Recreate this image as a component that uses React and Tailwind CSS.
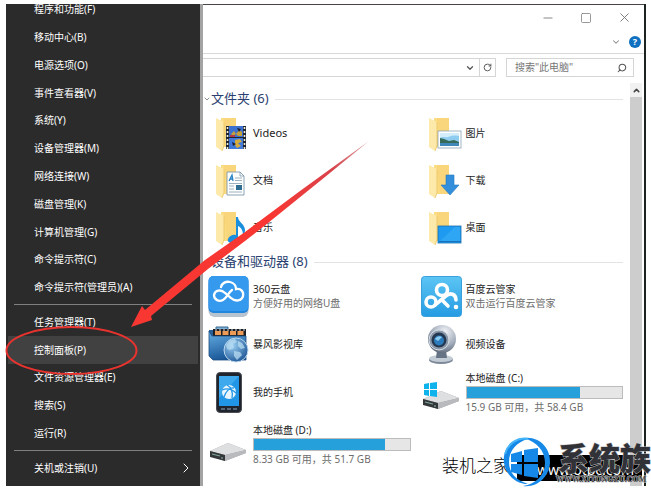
import React from 'react';
import { ChevronDown, ChevronRight, ChevronUp, Minus, RotateCw, Search, Square, X } from 'lucide-react';

const menuGroups = [
  [
    '程序和功能(F)',
    '移动中心(B)',
    '电源选项(O)',
    '事件查看器(V)',
    '系统(Y)',
    '设备管理器(M)',
    '网络连接(W)',
    '磁盘管理(K)',
    '计算机管理(G)',
    '命令提示符(C)',
    '命令提示符(管理员)(A)',
  ],
  ['任务管理器(T)', '控制面板(P)', '文件资源管理器(E)', '搜索(S)', '运行(R)'],
  ['关机或注销(U)'],
];

function FolderIcon({ children }) {
  return (
    <svg viewBox="0 0 34 36" className="w-[34px] h-9 shrink-0" aria-hidden="true">
      <path d="M6 2H21V31H6Z" fill="#fbdc83" />
      <path d="M9 2H21V31H12Z" fill="#f8d377" opacity="0.7" />
      <path d="M1 2L9 6V30L7 35L1 31Z" fill="#fde9a9" />
      <path d="M9 6V30L7 35" fill="none" stroke="#e9c35f" strokeWidth="0.8" />
      {children}
    </svg>
  );
}

function VideosIcon() {
  return (
    <FolderIcon>
      <rect x="11" y="10" width="20" height="23" fill="#1d2430" />
      <rect x="14" y="10" width="14" height="11" fill="#3b6fd0" />
      <rect x="14" y="22" width="14" height="11" fill="#3f79da" />
      <path d="M12.500 11V33M29.500 11V33" stroke="#f3f0dc" strokeWidth="1.600" strokeDasharray="2 2" />
      <path d="M16 18l3-3 2 3 3-4 3 2v4h-4l-2-2-3 2z" fill="#c4a03a" />
      <path d="M15 19h5v2h-5z" fill="#b03a48" />
      <path d="M20 24l5-1 2 3-4 1 3 3-4 2-2-3z" fill="#d5ad3c" />
      <path d="M22 12l4 1-2 3zM17 26l4 2-3 2z" fill="#182033" />
    </FolderIcon>
  );
}

function PicturesIcon() {
  return (
    <FolderIcon>
      <rect x="10" y="15" width="23" height="17" fill="#fff" stroke="#8ba3b5" strokeWidth="0.8" />
      <rect x="12" y="17" width="19" height="13" fill="#8fcdf0" />
      <path d="M12 22c3-2 5 0 8-1s6-2 11-1v-3H12z" fill="#d4edfa" />
      <path d="M12 22l4 1 5 2 5-1 5 2v1H12z" fill="#356b58" />
      <path d="M12 27h19v3H12z" fill="#3f88b8" />
    </FolderIcon>
  );
}

function DocumentsIcon() {
  return (
    <FolderIcon>
      <path d="M12 9H25L29 13V32H12Z" fill="#fdfeff" stroke="#7f99aa" strokeWidth="0.9" />
      <path d="M25 9V13H29" fill="none" stroke="#7f99aa" strokeWidth="0.8" />
      <path d="M14 18l3-6 1 6M15 16h3" fill="none" stroke="#2382c4" strokeWidth="1.300" />
      <path d="M20 15h7M20 17.500h7M14 20.500h13M14 23h5M14 26h5M14 29h13" stroke="#92a9b8" strokeWidth="0.9" />
      <rect x="21" y="22" width="6" height="5" fill="#2e6d91" />
    </FolderIcon>
  );
}

function DownloadsIcon() {
  return (
    <FolderIcon>
      <path d="M18 12h8v10h5L22 32L13 22h5z" fill="#338fdc" stroke="#2479c0" strokeWidth="0.6" />
    </FolderIcon>
  );
}

function MusicIcon() {
  return (
    <FolderIcon>
      <path d="M21 7h2c0 5 7 7 7 13 0 3-1 4-2 6 0-5-1-8-5-10v12c0 3-3 5-6 5-3 0-5-2-4-4 1-3 5-5 8-4z" fill="#1c8ede" />
    </FolderIcon>
  );
}

function DesktopIcon() {
  return (
    <FolderIcon>
      <rect x="10" y="16" width="23" height="17" fill="#1e9bf0" stroke="#1c6fae" strokeWidth="0.8" />
      <path d="M11 32L27 17h5v15z" fill="#3aadf7" opacity="0.6" />
      <path d="M11 31.500h22" stroke="#1672bb" />
    </FolderIcon>
  );
}

function CloudDriveIcon() {
  return (
    <svg viewBox="0 0 41 41" className="size-[41px]" aria-hidden="true">
      <rect x="0.5" y="3" width="40" height="38" rx="6" fill="#b7c3cf" />
      <rect x="0.5" y="0" width="40" height="37" rx="5" fill="#2186dd" />
      <rect x="0.5" y="0" width="40" height="35" rx="5" fill="#3599ee" />
      <path
        d="M13 11C14 7 18 5 22 6C26 7 28 10 28 13C33 12 36 16 35 20C34 25 27 26 23 22L17 17C13 13 7 14 6 19C6 24 11 26 15 24C19 22 20 17 24 14"
        fill="none"
        stroke="#fff"
        strokeWidth="2.300"
        strokeLinecap="round"
      />
    </svg>
  );
}

function BaiduIcon() {
  return (
    <svg viewBox="0 0 41 41" className="size-[41px]" aria-hidden="true">
      <defs>
        <linearGradient id="baidu" x1="0" y1="0" x2="0" y2="1">
          <stop offset="0" stopColor="#5cc5f4" />
          <stop offset="1" stopColor="#259be2" />
        </linearGradient>
      </defs>
      <rect x="0.500" y="0.500" width="40" height="40" rx="3" fill="url(#baidu)" stroke="#3aa0dd" />
      <g fill="none" stroke="#fff" strokeWidth="3.600" strokeLinecap="round">
        <circle cx="21" cy="14" r="5.500" />
        <circle cx="10" cy="26" r="5" />
        <path d="M14 29L25 20C29 16 35 18 35 24" />
        <path d="M21 24L27 30" />
      </g>
      <circle cx="35" cy="31" r="2.300" fill="#fff" />
    </svg>
  );
}

function MediaLibraryIcon() {
  return (
    <svg viewBox="0 0 41 41" className="size-[41px]" aria-hidden="true">
      <defs>
        <linearGradient id="library" x1="0" y1="0" x2="0.300" y2="1">
          <stop offset="0" stopColor="#67b0e6" />
          <stop offset="1" stopColor="#1a5798" />
        </linearGradient>
        <radialGradient id="globe" cx="0.350" cy="0.300" r="0.800">
          <stop offset="0" stopColor="#9bd0f3" />
          <stop offset="1" stopColor="#174f91" />
        </radialGradient>
      </defs>
      <path d="M8 6V3H20V6" fill="#7fb3d8" stroke="#33668f" />
      <path d="M1 6H5L38 5V32H1Z" fill="#245f97" />
      <rect x="5" y="5" width="33" height="8" fill="#1d1f24" />
      <path d="M7 9H37" stroke="#eb9b56" strokeWidth="4" strokeDasharray="6 1.500" />
      <path d="M7 6H37" stroke="#d9dfe4" strokeDasharray="2 2" />
      <path d="M1 7L4 12H38V36H5L1 32Z" fill="url(#library)" stroke="#1f4f7f" strokeWidth="0.8" />
      <circle cx="28" cy="26" r="12" fill="url(#globe)" stroke="#bcd9ee" />
      <path d="M18 21l4-5 5-1 2 3-4 2 1 4-4 2-3-1zM30 17l4 2 3 5-4 1-3-3zM26 27l6 1 2 3-5 5-3-4z" fill="#b8dcf2" opacity="0.75" />
    </svg>
  );
}

function WebcamIcon() {
  return (
    <svg viewBox="0 0 41 41" className="size-[41px]" aria-hidden="true">
      <defs>
        <radialGradient id="cam" cx="0.600" cy="0.250" r="0.800">
          <stop offset="0" stopColor="#f3f5f9" />
          <stop offset="0.600" stopColor="#a1abba" />
          <stop offset="1" stopColor="#596474" />
        </radialGradient>
      </defs>
      <ellipse cx="20" cy="36" rx="12" ry="4" fill="#7d8999" />
      <ellipse cx="20" cy="34.500" rx="12" ry="3.500" fill="#c3cbd5" />
      <path d="M16 26h9l1 8H15z" fill="#667385" />
      <circle cx="21" cy="15" r="14" fill="url(#cam)" />
      <circle cx="18" cy="16" r="10" fill="#8b98aa" stroke="#d6dde6" strokeWidth="1" />
      <circle cx="18" cy="16" r="7.500" fill="#26384f" />
      <circle cx="18" cy="16.500" r="5" fill="#2c7cbd" />
      <path d="M14 15a5 5 0 0 1 7-2l-4 4z" fill="#8bcdf0" />
    </svg>
  );
}

function PhoneIcon() {
  return (
    <svg viewBox="0 0 41 41" className="size-[41px]" aria-hidden="true">
      <rect x="8.500" y="0.500" width="25" height="40" rx="3.500" fill="#20242c" stroke="#4a4d54" />
      <rect x="11" y="4" width="20" height="30" fill="#2296e6" />
      <path d="M11 4h20L11 26z" fill="#5bbcf5" opacity="0.5" />
      <circle cx="21" cy="20" r="7" fill="#eaf6ff" />
      <path d="M14 18c5-2 10-1 14 3M16 25c2-6 6-10 10-9M19 13c4 2 6 7 5 13" fill="none" stroke="#2296e6" strokeWidth="1.300" />
      <path d="M13 37h4M19 37h4M25 37h4" stroke="#6a7d92" strokeWidth="1.400" />
    </svg>
  );
}

function DiskIcon({ system }) {
  return (
    <svg viewBox="0 0 41 41" className="size-[41px]" aria-hidden="true">
      <path d="M2 27L20 19L38 26V29L17 37L2 32Z" fill="#9b9da0" />
      <path d="M2 27L20 19L38 26L17 31Z" fill="#dedfe1" />
      <path d="M17 31L38 26V29L17 37Z" fill="#b8babd" />
      <path d="M2 27L17 31V37L2 33Z" fill="#34373a" />
      <path d="M4 30L12 32M14 33v2" stroke="#7ea698" strokeWidth="1.200" />
      {system && <path d="M3 12L8 11V17H3ZM9 11L16 10V17H9ZM3 18H8V24L3 23ZM9 18H16V25L9 24Z" fill="#0fb3ec" />}
    </svg>
  );
}

const folders = [
  { name: 'Videos', Icon: VideosIcon },
  { name: '图片', Icon: PicturesIcon },
  { name: '文档', Icon: DocumentsIcon },
  { name: '下载', Icon: DownloadsIcon },
  { name: '音乐', Icon: MusicIcon },
  { name: '桌面', Icon: DesktopIcon },
];

const devices = [
  { name: '360云盘', note: '方便好用的网络U盘', Icon: CloudDriveIcon },
  { name: '百度云管家', note: '双击运行百度云管家', Icon: BaiduIcon },
  { name: '暴风影视库', Icon: MediaLibraryIcon },
  { name: '视频设备', Icon: WebcamIcon },
  { name: '我的手机', Icon: PhoneIcon },
  { name: '本地磁盘 (C:)', note: '15.9 GB 可用，共 58.4 GB', used: 73, system: true, Icon: DiskIcon },
  { name: '本地磁盘 (D:)', note: '8.33 GB 可用，共 51.7 GB', used: 84, Icon: DiskIcon },
];

function SystemMenu() {
  return (
    <nav className="w-[197px] shrink-0 overflow-hidden bg-[#2b2b2b] border-r-3 border-[#a3a3a3] text-white">
      <div className="-mt-2 pb-1 h-[calc(100%+8px)] flex flex-col">
        {menuGroups.map((group, i) => (
          <React.Fragment key={group[0]}>
            {i > 0 && <hr className="mx-2 my-[3px] border-[#808080]" />}
            {group.map((label) => (
              <button
                key={label}
                className={`mx-0.5 flex-1 flex items-center justify-between pl-[26px] pr-1 text-left ${
                  label === '控制面板(P)' ? 'bg-[#414141]' : ''
                }`}
              >
                {label}
                {label === '关机或注销(U)' && <ChevronRight size={16} strokeWidth={1.5} />}
              </button>
            ))}
          </React.Fragment>
        ))}
      </div>
    </nav>
  );
}

function GroupHeader({ children }) {
  return (
    <h2 className="h-4 flex items-center text-[13px] text-[#2a3f6f]">
      <ChevronDown size={8} strokeWidth={2} className="text-[#555] shrink-0" />
      <span className="whitespace-nowrap">{children}</span>
      <span className="ml-1.5 mr-[7px] flex-1 border-t border-[#e3e3e3]" />
    </h2>
  );
}

function Device({ name, note, used, system, Icon }) {
  return (
    <li className="h-12 flex items-center gap-1 last:mt-1">
      <Icon system={system} />
      <div className="flex-1 flex flex-col gap-0.5 leading-3">
        <span>{name}</span>
        {used && (
          <div className="h-[13px] border border-[#bcbcbc] bg-[#e6e6e6]">
            <div className="h-full bg-[#26a0da]" style={{ width: `${used}%` }} />
          </div>
        )}
        {note && <span className="text-[#6d6d6d]">{note}</span>}
      </div>
    </li>
  );
}

function Explorer() {
  return (
    <main className="flex-1 min-w-0 flex flex-col bg-white">
      <div className="h-[25px] flex items-center justify-end gap-[25px] pr-3 text-[#777]">
        <button aria-label="最小化"><Minus size={14} strokeWidth={1.5} /></button>
        <button aria-label="最大化"><Square size={12} strokeWidth={1.5} /></button>
        <button aria-label="关闭"><X size={15} strokeWidth={1.5} /></button>
      </div>
      <div className="h-6 flex items-center justify-end gap-2 pr-[3px] border-b border-[#d9d9d9] text-[#888]">
        <button aria-label="展开功能区"><ChevronDown size={10} strokeWidth={2.5} /></button>
        <button aria-label="帮助" className="size-3 rounded-full bg-[#0f6fc0] text-[9px] leading-3 font-bold text-white">?</button>
      </div>

      {/* Address bar and search */}
      <div className="mt-1 h-[19px] flex gap-2.5 pr-2.5">
        <div className="flex-1 flex items-center justify-end border border-l-0 border-[#d5d5d5] text-[#555]">
          <button aria-label="历史记录" className="pr-1"><ChevronDown size={10} strokeWidth={3} /></button>
          <button aria-label="刷新" className="h-full border-l border-[#d5d5d5] px-[3px]"><RotateCw size={9} strokeWidth={2.5} /></button>
        </div>
        <label className="w-32 flex items-center border border-[#d5d5d5] pl-2 pr-1.5 text-[#555]">
          <input
            aria-label="搜索"
            placeholder={'搜索"此电脑"'}
            className="min-w-0 flex-1 outline-none placeholder:text-[#777]"
          />
          <Search size={10} strokeWidth={2.5} className="-scale-x-100" />
        </label>
      </div>

      <div className="mt-1.5 flex-1 flex">
        <div className="flex-1 min-w-0 pt-2">
          <section>
            <GroupHeader>文件夹 (6)</GroupHeader>
            <ul className="pt-[3px] pl-[5px] pr-[7px] grid grid-cols-2 gap-x-2.5">
              {folders.map(({ name, Icon }) => (
                <li key={name} className="h-[47px] flex items-center gap-1 pl-[7px] text-[#222]">
                  <Icon />
                  <span className={name === 'Videos' ? 'text-[11px]' : ''}>{name}</span>
                </li>
              ))}
            </ul>
          </section>
          <section className="pt-[3px]">
            <GroupHeader>设备和驱动器 (8)</GroupHeader>
            <ul className="pt-0.5 pl-[5px] pr-[7px] grid grid-cols-2 gap-x-2.5 text-[#222]">
              {devices.map((device) => (
                <Device key={device.name} {...device} />
              ))}
            </ul>
          </section>
        </div>
        <div className="w-3 bg-[#cdcdcd]">
          <button aria-label="向上滚动" className="w-full h-3.5 flex items-center justify-center bg-[#f1f1f1] text-[#444]">
            <ChevronUp size={9} strokeWidth={4} />
          </button>
        </div>
        <div className="w-0.5" />
      </div>
    </main>
  );
}

function Annotation() {
  return (
    <svg viewBox="0 0 651 491" className="absolute left-0 top-0 w-[651px] h-[491px] pointer-events-none" aria-hidden="true">
      <defs>
        <linearGradient id="arrow" x1="131" y1="327" x2="369" y2="142" gradientUnits="userSpaceOnUse">
          <stop offset="0.600" stopColor="#f83733" />
          <stop offset="0.850" stopColor="#d8434b" />
          <stop offset="1" stopColor="#d9a0a5" />
        </linearGradient>
      </defs>
      <path d="M131 327L142 306L145 310L205 260L245 232L300 191L369 141L325 177L268 223L245 241L208 269L151 316L152 320Z" fill="url(#arrow)" />
      <ellipse cx="71.500" cy="350.500" rx="65" ry="23.500" fill="none" stroke="#e8332f" strokeWidth="2" />
    </svg>
  );
}

function Watermark() {
  return (
    <footer className="absolute left-[442px] top-[435px] w-[209px] h-14 overflow-hidden whitespace-nowrap pointer-events-none">
      <span className="absolute left-0 top-5 font-['Liberation_Serif','Noto_Sans_CJK_SC',serif] text-[17px] leading-6 font-light text-black">装机之家</span>
      <span className="absolute left-[75px] top-5 w-[125px] h-[26px] bg-black pl-5 font-['Noto_Sans',sans-serif] text-sm leading-[30px] text-white">
        www.otpc.com
      </span>
      <svg viewBox="0 0 52 52" className="absolute left-[58px] top-px size-[52px]" aria-hidden="true">
        <path d="M28 3C14 0 2 12 4 27C6 39 16 48 28 48C16 44 9 37 9 26C9 14 17 6 28 3Z" fill="#1688e8" />
        <path d="M24 2C39 0 51 12 50 27C49 41 37 52 23 50C36 48 45 39 45 27C45 15 37 6 24 2Z" fill="#1688e8" />
        <path d="M28 3C18 1 8 7 5 18" fill="none" stroke="#45b5fa" strokeWidth="2" />
        <path d="M11 18L22 15V26H11ZM24 14L38 12V26H24ZM11 28H22V39L11 36ZM24 28H38V42L24 40Z" fill="#1688e8" />
      </svg>
      <strong className="absolute left-[116px] top-1 font-['Noto_Sans_CJK_SC',sans-serif] text-[31px] leading-9 font-black text-[#303238] [-webkit-text-stroke:1px_#bbb] [paint-order:stroke]">
        系统族
      </strong>
      <span className="absolute left-[114px] top-[39px] font-['Liberation_Serif',serif] text-[8px] leading-3 font-bold text-[#3a3c42] [-webkit-text-stroke:1px_#ccc] [paint-order:stroke]">
        WWW.XITONGZU.COM
      </span>
    </footer>
  );
}

export default function App() {
  return (
    <div className="relative min-h-screen flex pt-1 pr-[5px] pb-[5px] pl-1.5 bg-white font-['Noto_Sans','Noto_Sans_CJK_SC',sans-serif] text-[10px]">
      <div className="flex-1 flex border-r-2 border-[#1d2320]">
        <SystemMenu />
        <div className="flex-1 min-w-0 flex border-t border-[#4a4545]">
          <Explorer />
        </div>
      </div>
      <Annotation />
      <Watermark />
    </div>
  );
}
